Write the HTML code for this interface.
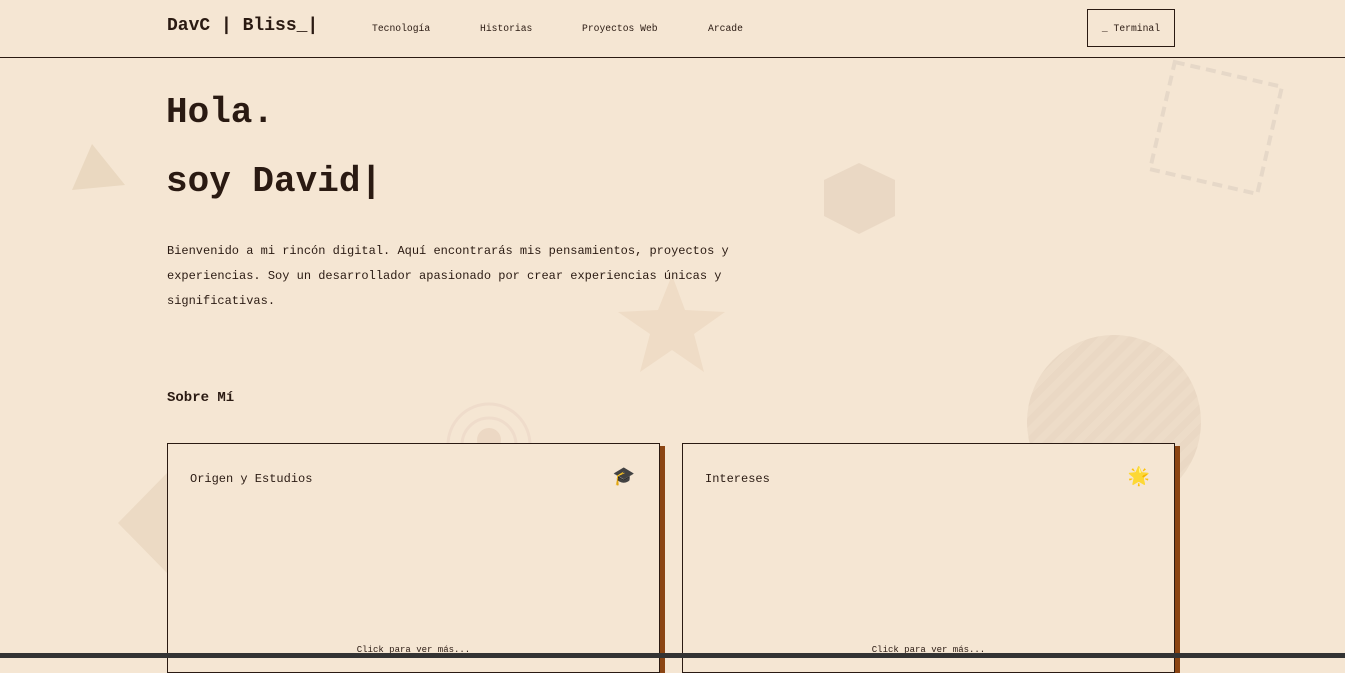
<!DOCTYPE html>
<html><head><meta charset="utf-8"><style>
*{margin:0;padding:0;box-sizing:border-box}
body{width:1345px;height:658px;overflow:hidden;background:#f5e6d3;font-family:"Liberation Mono",monospace;color:#2a1a12;position:relative}
.nav{position:absolute;left:0;top:0;width:1345px;height:58px;border-bottom:1.5px solid #2a1a12}
.logo{position:absolute;left:167px;top:16px;font-size:18px;font-weight:bold}
.nl{position:absolute;top:23px;font-size:9.7px}
.term{position:absolute;left:1087px;top:9px;width:88px;height:38px;border:1px solid #2a1a12;font-size:9.7px;text-align:center;line-height:37px}
h1{position:absolute;left:166px;font-size:36px;font-weight:bold;line-height:1}
.p{position:absolute;left:167px;top:239px;font-size:12px;line-height:25px;white-space:nowrap}
.sm{position:absolute;left:167px;top:390px;font-size:14px;font-weight:bold}
.card{position:absolute;top:443px;width:493px;height:230px;border:1px solid #2a1a12;background:#f5e6d3;box-shadow:5px 3px 0 #8b4513}
.card .t{position:absolute;left:22px;top:28px;font-size:12px}
.card .c{position:absolute;left:0;right:0;top:201px;text-align:center;font-size:9px}
.card .i{position:absolute;right:24px;top:22px;font-size:18px}
.bar{position:absolute;left:0;top:653px;width:1345px;height:5px;background:#333}
</style></head><body>
<svg style="position:absolute;left:0;top:0" width="1345" height="658">
<polygon points="72,190 92,144 125,185" fill="#ead8c0"/>
<polygon points="859,163 895,180 895,216 859,234 824,216 824,180" fill="#ead8c4"/>
<polygon points="672,275 685,310 725,312 694,334 704,372 672,350 640,372 650,334 618,312 658,310" fill="#efdcc6"/>
<polygon points="118,523 167,473 167,573" fill="#ecdac4"/>
<g transform="rotate(13 1216 128)"><rect x="1161" y="73" width="110" height="110" fill="none" stroke="#e6d8c8" stroke-width="4" stroke-dasharray="10 6"/></g>
<defs><pattern id="st" width="14" height="14" patternUnits="userSpaceOnUse" patternTransform="rotate(45)"><rect width="7" height="14" fill="#e8d6c2"/></pattern></defs>
<circle cx="1114" cy="422" r="87" fill="#eddcc8"/>
<circle cx="1114" cy="422" r="87" fill="url(#st)" opacity=".6"/>
<circle cx="489" cy="445" r="41" fill="none" stroke="#efdccb" stroke-width="3"/>
<circle cx="489" cy="445" r="27" fill="none" stroke="#efdccb" stroke-width="3"/>
<circle cx="489" cy="440" r="12" fill="#ecd8c4"/>
</svg>
<div class="nav">
<div class="logo">DavC | Bliss_|</div>
<div class="nl" style="left:372px">Tecnología</div>
<div class="nl" style="left:480px">Historias</div>
<div class="nl" style="left:582px">Proyectos Web</div>
<div class="nl" style="left:708px">Arcade</div>
<div class="term">_ Terminal</div>
</div>
<h1 style="top:95px">Hola.</h1>
<h1 style="top:164px">soy David|</h1>
<div class="p">Bienvenido a mi rincón digital. Aquí encontrarás mis pensamientos, proyectos y<br>experiencias. Soy un desarrollador apasionado por crear experiencias únicas y<br>significativas.</div>
<div class="sm">Sobre Mí</div>
<div class="card" style="left:167px"><div class="t">Origen y Estudios</div><div class="i">🎓</div><div class="c">Click para ver más...</div></div>
<div class="card" style="left:682px"><div class="t">Intereses</div><div class="i">🌟</div><div class="c">Click para ver más...</div></div>
<div class="bar"></div>
</body></html>
